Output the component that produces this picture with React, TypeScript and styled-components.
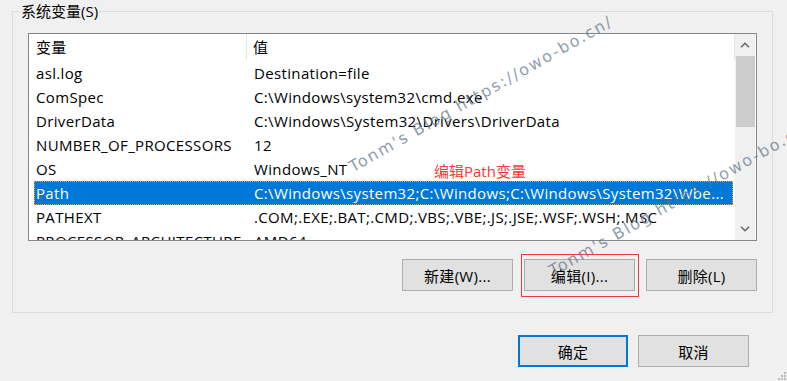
import React from "react"
import styled, { createGlobalStyle, css } from "styled-components"

const uiFont = `"Open Sans", "Noto Sans CJK SC", sans-serif`

const GlobalStyle = createGlobalStyle`
  html, body {
    margin: 0;
    padding: 0;
    background: #f0f0f0;
  }
  body {
    font-family: ${uiFont};
    font-size: 15px;
    color: #000;
  }
`

const Page = styled.div`
  position: relative;
  box-sizing: border-box;
  width: 787px;
  height: 381px;
  overflow: hidden;
  padding: 1px 14px 0 12px;
`

const GroupBox = styled.fieldset`
  margin: 0;
  padding: 0 15px 21px 15px;
  border: 1px solid #dcdcdc;
  min-width: 0;
`

const Legend = styled.legend`
  margin-left: -8px;
  padding: 0 1px;
  line-height: 20px;
  font-size: 15px;
`

const ListBox = styled.div`
  margin-top: 12px;
  height: 208px;
  box-sizing: border-box;
  border: 1px solid #828790;
  background: #fff;
  display: flex;
  overflow: hidden;
`

const ListBody = styled.div`
  flex: 1;
  min-width: 0;
  overflow: hidden;
  letter-spacing: 0.35px;
`

const Header = styled.div`
  display: grid;
  grid-template-columns: 217px 1px 1fr 1px;
  height: 27px;
  align-items: center;
`

const HeaderCell = styled.div<{ $pad: number }>`
  padding-left: ${(p) => p.$pad}px;
  line-height: 27px;
`

const HeaderDivider = styled.div`
  align-self: stretch;
  margin-bottom: 1px;
  background: #e5e5e5;
`

const Row = styled.div<{ $selected?: boolean }>`
  display: grid;
  grid-template-columns: 219px 1fr;
  height: 24px;
  line-height: 22px;
  margin: 0 2px 0 5px;
  box-sizing: border-box;
  border: 1px solid transparent;
  white-space: nowrap;
  ${(p) =>
    p.$selected &&
    css`
      background: #0078d7;
      color: #fff;
      border: 1px dotted #f0a040;
    `}
`

const Cell = styled.div<{ $first?: boolean }>`
  overflow: hidden;
  padding-left: ${(p) => (p.$first ? 1 : 0)}px;
`

const ScrollBar = styled.div`
  width: 20px;
  margin-right: 1px;
  background: #f0f0f0;
  display: flex;
  flex-direction: column;
`

const ScrollArrow = styled.div`
  height: 22px;
  display: flex;
  align-items: center;
  justify-content: center;
  color: #606060;
`

const ScrollTrack = styled.div`
  flex: 1;
  padding: 0 0 0 1px;
`

const ScrollThumb = styled.div`
  height: 71px;
  width: 19px;
  background: #cdcdcd;
`

const ButtonRow = styled.div<{ $gap: number }>`
  display: flex;
  justify-content: flex-end;
  gap: ${(p) => p.$gap}px;
`

const ActionRow = styled(ButtonRow)`
  margin-top: 18px;
`

const FooterRow = styled(ButtonRow)`
  margin-top: 22px;
  padding-right: 24px;
`

const Button = styled.button<{ $primary?: boolean; $width: number }>`
  width: ${(p) => p.$width}px;
  height: 32px;
  box-sizing: border-box;
  margin: 0;
  padding: 0;
  background: #e1e1e1;
  border: 1px solid #adadad;
  font-family: ${uiFont};
  font-size: 15px;
  letter-spacing: 0.3px;
  color: #000;
  ${(p) =>
    p.$primary &&
    css`
      border: 2px solid #0078d7;
    `}
`

const Highlight = styled.span`
  position: relative;
  display: flex;
  &::after {
    content: "";
    position: absolute;
    left: -3px;
    right: -4px;
    top: -5px;
    bottom: -6px;
    border: 1px solid #ec3b3b;
    pointer-events: none;
  }
`

const Annotation = styled.div`
  position: absolute;
  left: 434px;
  top: 160px;
  color: #f53a3a;
  font-size: 15px;
  line-height: 22px;
`

const Watermark = styled.div<{ $x: number; $y: number }>`
  position: absolute;
  left: ${(p) => p.$x}px;
  top: ${(p) => p.$y}px;
  transform-origin: 0 100%;
  transform: rotate(-29.5deg);
  font-family: "DejaVu Sans", sans-serif;
  font-size: 16px;
  line-height: 18px;
  letter-spacing: 1.8px;
  white-space: nowrap;
  color: rgba(95, 115, 135, 0.72);
  pointer-events: none;
`

const Grip = styled.svg`
  position: absolute;
  right: 1px;
  bottom: 1px;
`

const Chevron = ({ up }: { up?: boolean }) => (
  <svg width="10" height="6" viewBox="0 0 10 6">
    <path
      d={up ? "M1 5.2 L5 1.2 L9 5.2" : "M1 0.8 L5 4.8 L9 0.8"}
      fill="none"
      stroke="currentColor"
      strokeWidth="1.4"
    />
  </svg>
)

const rows: [string, string][] = [
  ["asl.log", "Destination=file"],
  ["ComSpec", "C:\\Windows\\system32\\cmd.exe"],
  ["DriverData", "C:\\Windows\\System32\\Drivers\\DriverData"],
  ["NUMBER_OF_PROCESSORS", "12"],
  ["OS", "Windows_NT"],
  ["Path", "C:\\Windows\\system32;C:\\Windows;C:\\Windows\\System32\\Wbe..."],
  ["PATHEXT", ".COM;.EXE;.BAT;.CMD;.VBS;.VBE;.JS;.JSE;.WSF;.WSH;.MSC"],
  ["PROCESSOR_ARCHITECTURE", "AMD64"],
]

const watermarkText = "Tonm's Blog https://owo-bo.cn/"

const App = () => (
  <Page>
    <GlobalStyle />
    <GroupBox>
      <Legend>系统变量(S)</Legend>
      <ListBox>
        <ListBody>
          <Header>
            <HeaderCell $pad={7}>变量</HeaderCell>
            <HeaderDivider />
            <HeaderCell $pad={6}>值</HeaderCell>
            <HeaderDivider />
          </Header>
          {rows.map(([name, value]) => (
            <Row key={name} $selected={name === "Path"}>
              <Cell $first>{name}</Cell>
              <Cell>{value}</Cell>
            </Row>
          ))}
        </ListBody>
        <ScrollBar>
          <ScrollArrow>
            <Chevron up />
          </ScrollArrow>
          <ScrollTrack>
            <ScrollThumb />
          </ScrollTrack>
          <ScrollArrow>
            <Chevron />
          </ScrollArrow>
        </ScrollBar>
      </ListBox>
      <ActionRow $gap={11}>
        <Button $width={111}>新建(W)...</Button>
        <Highlight>
          <Button $width={111}>编辑(I)...</Button>
        </Highlight>
        <Button $width={111}>删除(L)</Button>
      </ActionRow>
    </GroupBox>
    <FooterRow $gap={10}>
      <Button $width={110} $primary>
        确定
      </Button>
      <Button $width={111}>取消</Button>
    </FooterRow>
    <Annotation>编辑Path变量</Annotation>
    <Watermark $x={355} $y={158}>
      {watermarkText}
    </Watermark>
    <Watermark $x={555} $y={262}>
      {watermarkText}
    </Watermark>
    <Grip width="9" height="9" viewBox="0 0 9 9">
      {[
        [7, 1],
        [4, 4],
        [7, 4],
        [1, 7],
        [4, 7],
        [7, 7],
      ].map(([x, y]) => (
        <rect key={`${x}-${y}`} x={x} y={y} width="2" height="2" fill="#bcbcbc" />
      ))}
    </Grip>
  </Page>
)

export default App
